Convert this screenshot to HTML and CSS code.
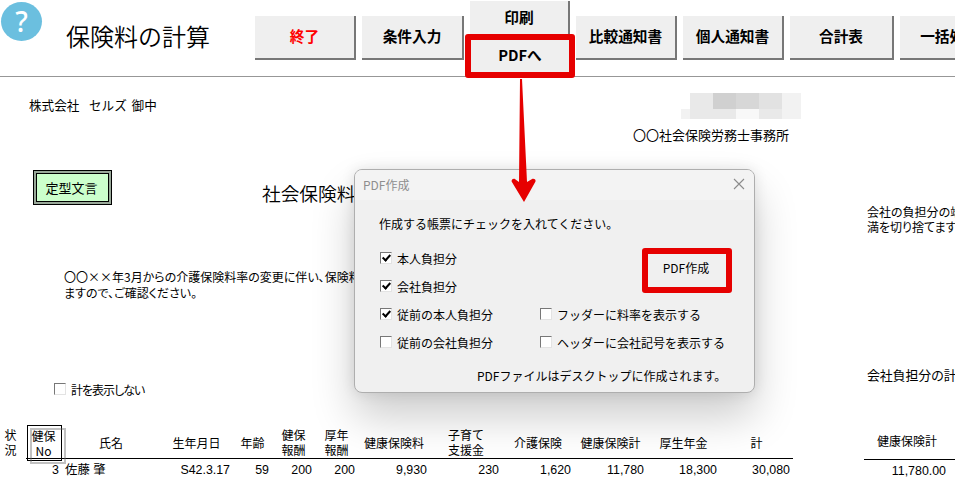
FILE: index.html
```html
<!DOCTYPE html>
<html lang="ja">
<head>
	<meta charset="utf-8">
	<title>保険料の計算</title>
	<link rel="stylesheet" href="styles.css">
</head>
<body>
	<div class="toolbar">
		<div class="help">?</div>
		<h1 class="heading">保険料の計算</h1>
		<div class="buttons">
			<button class="btn quit">終了</button>
			<button class="btn w102">条件入力</button>
			<div class="stack">
				<button class="btn print">印刷</button>
				<button class="btn pdf">PDFへ</button>
			</div>
			<button class="btn">比較通知書</button>
			<button class="btn">個人通知書</button>
			<button class="btn w103">合計表</button>
			<button class="btn">一括処理</button>
		</div>
	</div>

	<div class="sheet">
		<div class="page left">
			<div class="address">
				<div class="company">株式会社　<span>セルズ</span> 御中</div>
				<div class="office">
					<div class="mosaic">
						<i></i><i class="m2"></i><i class="m5"></i><i class="m4"></i><i class="m3"></i><i class="m1"></i>
						<i class="m1"></i><i class="m2"></i><i class="m2"></i><i class="m0"></i><i class="m2"></i><i class="m1"></i>
					</div>
					<div class="office-name">〇〇社会保険労務士事務所</div>
				</div>
			</div>
			<div class="subject">
				<button class="phrase">定型文言</button>
				<div class="subject-text">社会保険料</div>
			</div>
			<div class="message">〇〇××年3月からの介護保険料率の変更に伴い、保険料<br>ますので、ご確認ください。</div>
			<div class="option"><span class="check"></span><span class="option-text">計を表示しない</span></div>
			<div class="table head">
				<div class="status">状<br>況</div>
				<div class="no">健保<br>No</div>
				<div>氏名</div>
				<div>生年月日</div>
				<div>年齢</div>
				<div>健保<br>報酬</div>
				<div>厚年<br>報酬</div>
				<div>健康保険料</div>
				<div>子育て<br>支援金</div>
				<div>介護保険</div>
				<div>健康保険計</div>
				<div>厚生年金</div>
				<div>計</div>
			</div>
			<div class="table data">
				<div></div>
				<div>3</div>
				<div class="name">佐藤 肇</div>
				<div>S42.3.17</div>
				<div>59</div>
				<div>200</div>
				<div>200</div>
				<div>9,930</div>
				<div>230</div>
				<div>1,620</div>
				<div>11,780</div>
				<div>18,300</div>
				<div>30,080</div>
			</div>
		</div>
		<div class="page right">
			<div class="note">会社の負担分の端数<br>満を切り捨てます</div>
			<div class="total">会社負担分の計</div>
			<div class="total-head">健康保険計</div>
			<div class="total-data">11,780.00</div>
		</div>
	</div>

	<div class="dialog">
		<div class="titlebar">
			<span>PDF作成</span>
			<svg width="12" height="12" viewBox="0 0 12 12"><path d="M1 1L11 11M11 1L1 11" stroke="#8b8b8b" stroke-width="1.1" fill="none"/></svg>
		</div>
		<div class="lead">作成する帳票にチェックを入れてください。</div>
		<div class="dialog-body">
			<div class="checks">
				<label><span class="check on"></span>本人負担分</label>
				<label><span class="check on"></span>会社負担分</label>
				<label><span class="check on"></span>従前の本人負担分</label>
				<label><span class="check"></span>従前の会社負担分</label>
			</div>
			<div class="side">
				<button class="create">PDF作成</button>
				<div class="checks">
					<label><span class="check"></span>フッダーに料率を表示する</label>
					<label><span class="check"></span>ヘッダーに会社記号を表示する</label>
				</div>
			</div>
		</div>
		<div class="dialog-foot">PDFファイルはデスクトップに作成されます。</div>
	</div>

	<svg class="arrow" width="28" height="126" viewBox="0 0 28 126">
		<path d="M10 1H12L17 104L22.500 100.800Q26 100.500 25.500 103.500L14 124L1.600 103.500Q1.500 100.500 4.500 100.800L9 104Z" fill="#e60000"/>
	</svg>
</body>
</html>
```

FILE: styles.css
```css
* {
	box-sizing: border-box;
}
body {
	margin: 0;
	width: 955px;
	height: 477px;
	overflow: hidden;
	position: relative;
	background: #fff;
	color: #000;
	font: 12px/15px "Noto Sans CJK JP", sans-serif;
	white-space: nowrap;
}
button {
	font: inherit;
	color: inherit;
	padding: 0;
	border: 0;
	white-space: nowrap;
}

/* toolbar */
.toolbar {
	display: flex;
	height: 77px;
	border-bottom: 1px solid #979797;
}
.help {
	flex: none;
	width: 41px;
	height: 39px;
	margin: 2px 0 0 1px;
	border-radius: 50%;
	background: #6bbfdf;
	color: #fff;
	font: 500 28px/39px "Noto Sans", sans-serif;
	text-align: center;
}
.heading {
	flex: none;
	width: 189px;
	margin: 18px 0 0 24px;
	font-size: 24px;
	line-height: 36px;
	font-weight: 350;
}
.buttons {
	display: flex;
	gap: 6px;
}
.btn {
	flex: none;
	width: 101px;
	height: 44px;
	margin-top: 16px;
	padding-bottom: 4px;
	background: #efefef;
	border-right: 2px solid #777;
	border-bottom: 2px solid #777;
	font-size: 14.67px;
	font-weight: 700;
}
.w102 {
	width: 102px;
}
.w103 {
	width: 104px;
}
.quit {
	color: #f00;
}
.stack {
	width: 100px;
}
.stack .btn {
	display: block;
	width: 100px;
}
.stack .print {
	height: 33px;
	margin-top: 1px;
	padding: 0 0 2px;
	border-bottom: 0;
}
.stack .pdf {
	position: relative;
	width: 110px;
	height: 44px;
	margin: 0 -5px;
	padding: 0 0 4px;
	border: 6px solid #e60000;
	border-radius: 3px;
}

/* sheet */
.sheet {
	display: flex;
}
.page {
	flex: none;
}
.left {
	width: 793px;
}
.right {
	width: 91px;
	margin-left: 71px;
	overflow: hidden;
}
.address {
	display: flex;
	height: 93px;
	padding-left: 29px;
}
.company {
	flex: none;
	width: 604px;
	margin-top: 20px;
	font-size: 12.6px;
}
.company span {
	margin: 0 2px 0 -3px;
}
.mosaic {
	display: grid;
	grid-template-columns: 9px 23px 23px 23px 23px 19px;
	grid-template-rows: 16px 10px;
	width: 120px;
	margin: 16px 0 0 48px;
}
.m0 { background: #f8f8f8; }
.m1 { background: #f2f2f2; }
.m2 { background: #e9e9e9; }
.m3 { background: #e2e2e2; }
.m4 { background: #d7d7d7; }
.m5 { background: #d0d0d0; }
.office-name {
	margin-top: 8px;
	font-size: 13px;
}
.subject {
	display: flex;
	height: 99px;
	padding-left: 33px;
}
.phrase {
	width: 79px;
	height: 35px;
	padding: 0 2px 1px 0;
	border: 1px solid #000;
	outline: 1px solid #000;
	outline-offset: -4px;
	background: #cfc;
	box-shadow: inset 0 0 0 2px #99a899;
	font-size: 13px;
}
.subject-text {
	margin: 10px 0 0 150px;
	font-size: 18.7px;
	line-height: 26px;
	font-weight: 350;
}
.message {
	height: 113px;
	padding-left: 64px;
	line-height: 15.5px;
	font-feature-settings: "palt";
}
.option {
	display: flex;
	gap: 5px;
	height: 41px;
	padding-left: 54px;
}
.option-text {
	letter-spacing: -1px;
	font-feature-settings: "palt";
}
.check {
	flex: none;
	width: 12px;
	height: 12px;
	margin-top: 1px;
	background: #fff;
	border: 1px solid #e3e3e3;
	border-top-color: #777;
	border-left-color: #777;
}
.check.on::before {
	content: "";
	display: block;
	width: 3px;
	height: 6px;
	margin: 0 0 0 3px;
	border: solid #000;
	border-width: 0 2px 2px 0;
	transform: rotate(42deg);
}
.table {
	display: grid;
	grid-template-columns: 26px 36px 98px 73px 39px 43px 43px 72px 72px 72px 73px 73px 73px;
}
.head {
	height: 36px;
	padding-bottom: 4px;
	align-items: center;
	text-align: center;
	background: linear-gradient(#000, #000) 26px 35px / 767px 1px no-repeat;
}
.status {
	padding-right: 5px;
}
.no {
	position: relative;
	height: 36px;
	margin: 2px 0 0 1px;
	padding: 2px 2px 0 0;
	border: 1px solid #000;
}
.no::after {
	content: "";
	box-sizing: border-box;
	position: absolute;
	left: 2px;
	top: 2px;
	width: 36px;
	height: 36px;
	border: 2px solid rgba(100, 100, 100, .4);
}
.data {
	height: 20px;
	line-height: 23px;
	text-align: right;
}
.data div {
	padding-right: 3px;
}
.data div,
.total-data {
	font-family: "Liberation Sans", "Noto Sans CJK JP", sans-serif;
	font-size: 12.4px;
}
.data .name {
	padding-left: 3px;
	text-align: left;
}
.note {
	height: 163px;
	margin-top: 127px;
	padding-left: 3px;
	font-feature-settings: "palt";
}
.total {
	height: 57px;
	padding-left: 3px;
	font-size: 13px;
	letter-spacing: -.2px;
}
.total-head {
	height: 36px;
	padding: 9px 0 0 13px;
	border-bottom: 1px solid #000;
}
.total-data {
	padding-right: 9px;
	line-height: 22px;
	text-align: right;
}

/* PDF dialog */
.dialog {
	position: absolute;
	left: 354px;
	top: 169px;
	width: 401px;
	height: 224px;
	border: 1px solid #aeaeae;
	border-radius: 8px;
	background: #f0f0f0;
	box-shadow: 0 24px 44px rgba(0, 0, 0, .2), 0 0 14px rgba(0, 0, 0, .1);
}
.titlebar {
	display: flex;
	justify-content: space-between;
	align-items: center;
	height: 30px;
	padding: 0 9px 2px 8px;
	border-radius: 7px 7px 0 0;
	background: #f3f3f3;
	color: #8e8e8e;
}
.lead {
	height: 45px;
	padding: 16px 0 0 24px;
}
.dialog-body {
	display: flex;
	height: 122px;
	padding-left: 25px;
}
.checks label {
	display: flex;
	gap: 5px;
	height: 28px;
	padding-top: 6px;
}
.checks:first-child {
	width: 160px;
}
.create {
	display: block;
	width: 90px;
	height: 45px;
	margin: 3px 0 8px 102px;
	padding: 0 2px 6px 0;
	border: 6px solid #e60000;
	border-radius: 3px;
	background: #f0f0f0;
}
.dialog-foot {
	padding: 1px 0 0 122px;
}
.arrow {
	position: absolute;
	left: 510px;
	top: 78px;
}
```
